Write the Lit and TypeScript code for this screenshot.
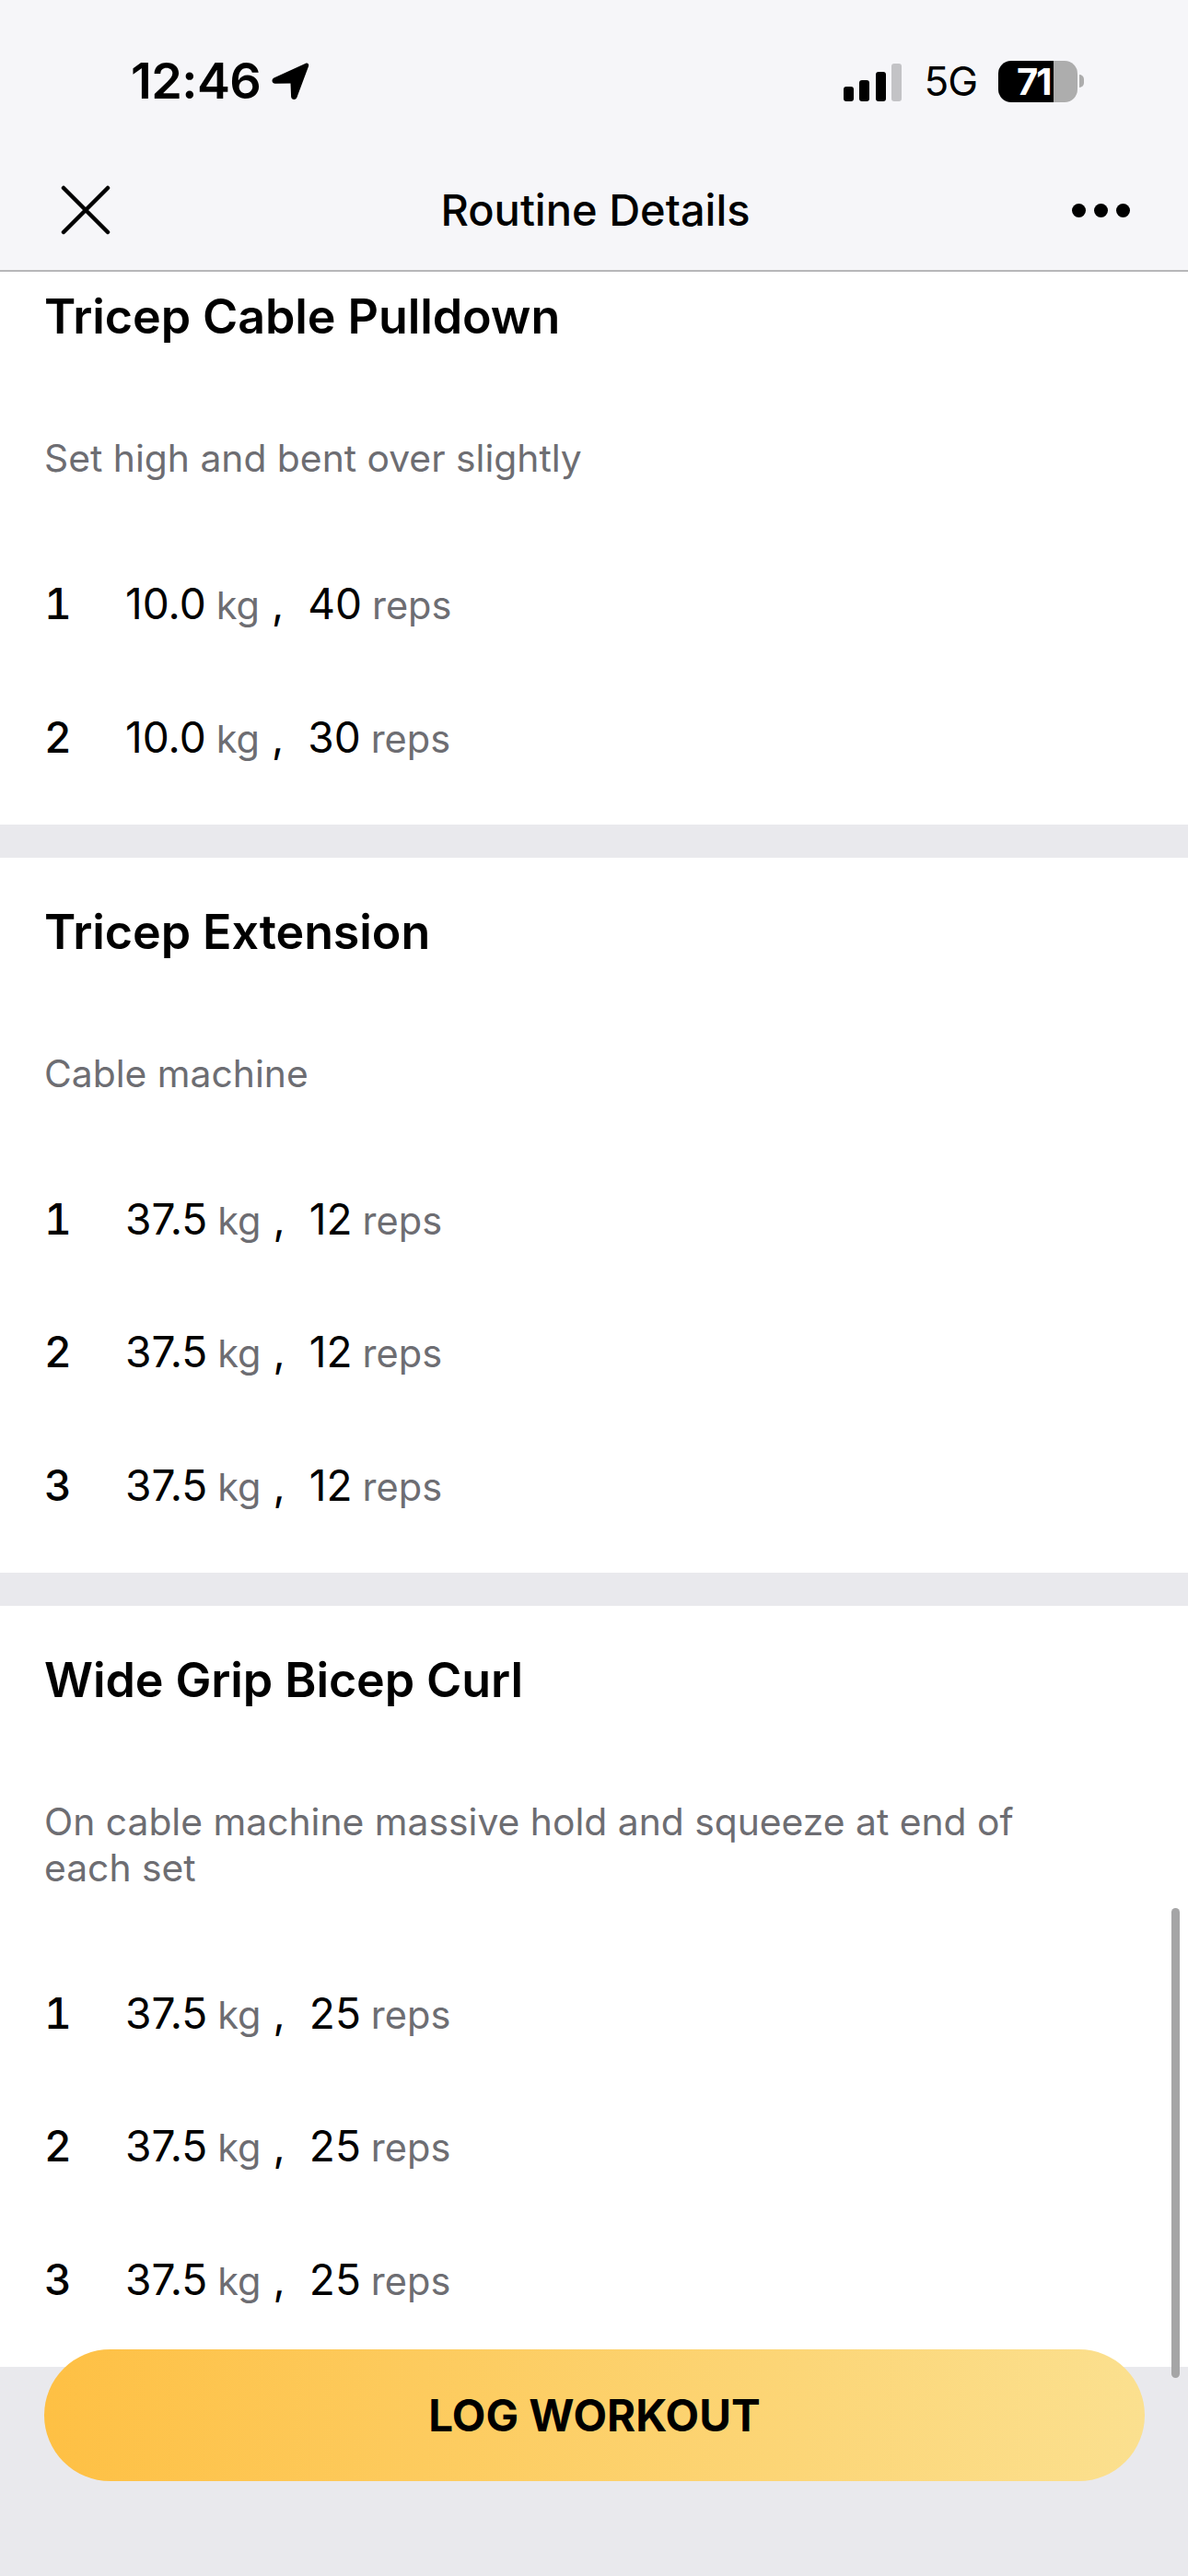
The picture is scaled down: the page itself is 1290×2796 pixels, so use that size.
import {LitElement, html, css} from 'lit';
import {customElement} from 'lit/decorators.js';

interface WorkoutSet {
  weight: string;
  reps: number;
}

interface Exercise {
  name: string;
  note: string;
  sets: WorkoutSet[];
}

const sameSets = (count: number, weight: string, reps: number): WorkoutSet[] =>
  Array.from({length: count}, () => ({weight, reps}));

const EXERCISES: Exercise[] = [
  {
    name: 'Tricep Cable Pulldown',
    note: 'Set high and bent over slightly',
    sets: [
      {weight: '10.0', reps: 40},
      {weight: '10.0', reps: 30},
    ],
  },
  {name: 'Tricep Extension', note: 'Cable machine', sets: sameSets(3, '37.5', 12)},
  {
    name: 'Wide Grip Bicep Curl',
    note: 'On cable machine massive hold and squeeze at end of each set',
    sets: sameSets(3, '37.5', 25),
  },
];

@customElement('app-root')
export class AppRoot extends LitElement {
  static styles = css`
    :host {
      display: block;
      width: 1290px;
      height: 2796px;
      font-family: Inter, 'Noto Sans', sans-serif;
      color: #000;
      background: #e9e9ed;
    }
    .page {
      position: relative;
      display: flex;
      flex-direction: column;
      height: 2796px;
      overflow: hidden;
    }

    /* status bar + nav */
    .header {
      flex: none;
      height: 293px;
      background: #f6f6f9;
      border-bottom: 2px solid #b7b7b9;
    }
    .status {
      display: flex;
      align-items: center;
      height: 176px;
      padding: 0 113px 0 142px;
    }
    .time {
      font-size: 54px;
      font-weight: 600;
      letter-spacing: -0.6px;
      line-height: 60px;
    }
    .arrow {
      width: 43px;
      height: 42px;
      margin-left: 11px;
    }
    .status-right {
      display: flex;
      align-items: center;
      margin-left: auto;
    }
    .signal {
      display: flex;
      align-items: flex-end;
      gap: 6.5px;
      height: 41px;
      margin-top: 3px;
    }
    .signal i {
      width: 11px;
      border-radius: 3px;
      background: #000;
    }
    .signal i.off {
      background: #c3c3c6;
    }
    .network {
      margin-left: 24px;
      font-size: 44px;
      font-weight: 400;
      line-height: 50px;
      letter-spacing: -1px;
    }
    .battery {
      width: 86px;
      height: 45px;
      margin-left: 23px;
      padding-left: 20px;
      box-sizing: border-box;
      border-radius: 14px;
      background: linear-gradient(90deg, #000 60px, #adadad 60px);
      color: #fff;
      font-size: 40px;
      font-weight: 700;
      letter-spacing: -2px;
      line-height: 45px;
      white-space: nowrap;
    }
    .nub {
      width: 5px;
      height: 14px;
      margin-left: 2px;
      border-radius: 0 5px 5px 0;
      background: #adadad;
    }
    .nav {
      display: grid;
      grid-template-columns: 1fr auto 1fr;
      align-items: center;
      height: 104px;
      padding: 0 63px 0 66px;
    }
    .close {
      width: 54px;
      height: 54px;
    }
    .nav-title {
      font-size: 47px;
      font-weight: 500;
      line-height: 60px;
    }
    .more {
      display: flex;
      justify-content: flex-end;
      gap: 9px;
    }
    .more i {
      width: 15px;
      height: 15px;
      border-radius: 50%;
      background: #000;
    }

    /* exercise list, scrolled a little */
    .scroller {
      flex: 1;
      min-height: 0;
      overflow: hidden;
    }
    .list {
      display: flex;
      flex-direction: column;
      gap: 36px;
      margin-top: -32px;
    }
    .exercise {
      padding: 51px 48px 65px;
      background: #fff;
    }
    .name {
      font-size: 52px;
      font-weight: 600;
      line-height: 60px;
      letter-spacing: -0.1px;
    }
    .note {
      margin-top: 98px;
      max-width: 1110px;
      color: #6d6d72;
      font-size: 40.8px;
      line-height: 50px;
    }
    .sets {
      display: flex;
      flex-direction: column;
      gap: 84.5px;
      margin-top: 103px;
    }
    .set {
      display: flex;
      align-items: baseline;
      height: 60px;
      line-height: 60px;
      font-size: 46px;
    }
    .index {
      width: 88px;
      font-weight: 500;
      font-variant-numeric: tabular-nums;
    }
    .unit {
      margin-left: 11px;
      color: #6d6d72;
      font-size: 41.5px;
    }
    .comma {
      margin: 0 26px 0 13px;
    }

    /* bottom action */
    .footer {
      flex: none;
      height: 227px;
      padding: 0 47px 0 48px;
      background: #e9e9ed;
    }
    .log {
      display: flex;
      align-items: center;
      justify-content: center;
      position: relative;
      height: 143px;
      margin-top: -19px;
      border-radius: 72px;
      background: linear-gradient(90deg, #fec044, #fbe08f);
      font-size: 47.500px;
      font-weight: 700;
    }
    .scrollbar {
      position: absolute;
      left: 1272px;
      top: 2071px;
      width: 9px;
      height: 510px;
      border-radius: 5px;
      background: #a5a5a6;
    }
  `;

  renderSet(set: WorkoutSet, index: number) {
    return html`
      <div class="set">
        <span class="index">${index + 1}</span>
        <span>${set.weight}</span><span class="unit">kg</span>
        <span class="comma">,</span>
        <span>${set.reps}</span><span class="unit">reps</span>
      </div>
    `;
  }

  renderExercise(exercise: Exercise) {
    return html`
      <section class="exercise">
        <div class="name">${exercise.name}</div>
        <div class="note">${exercise.note}</div>
        <div class="sets">${exercise.sets.map((set, i) => this.renderSet(set, i))}</div>
      </section>
    `;
  }

  render() {
    return html`
      <div class="page">
        <header class="header">
          <div class="status">
            <span class="time">12:46</span>
            <svg class="arrow" viewBox="0 0 43 42">
              <path d="M3.500 17.500 38 1.800c2-.9 3.800 1 3.100 3L28.300 39c-1.200 3-6 2.500-6.200-1L21.500 23.500 5 23.800c-3.800.1-4.800-4.700-1.500-6.300z" fill="#000" />
            </svg>
            <div class="status-right">
              <div class="signal">
                <i style="height:16px"></i><i style="height:23px"></i><i style="height:32px"></i><i class="off" style="height:41px"></i>
              </div>
              <span class="network">5G</span>
              <div class="battery">71</div>
              <div class="nub"></div>
            </div>
          </div>
          <nav class="nav">
            <svg class="close" viewBox="0 0 54 54">
              <path d="M3 3 51 51M51 3 3 51" fill="none" stroke="#000" stroke-width="4.500" stroke-linecap="round" />
            </svg>
            <div class="nav-title">Routine Details</div>
            <div class="more"><i></i><i></i><i></i></div>
          </nav>
        </header>
        <main class="scroller">
          <div class="list">${EXERCISES.map((e) => this.renderExercise(e))}</div>
        </main>
        <footer class="footer"><div class="log">LOG WORKOUT</div></footer>
        <div class="scrollbar"></div>
      </div>
    `;
  }
}
